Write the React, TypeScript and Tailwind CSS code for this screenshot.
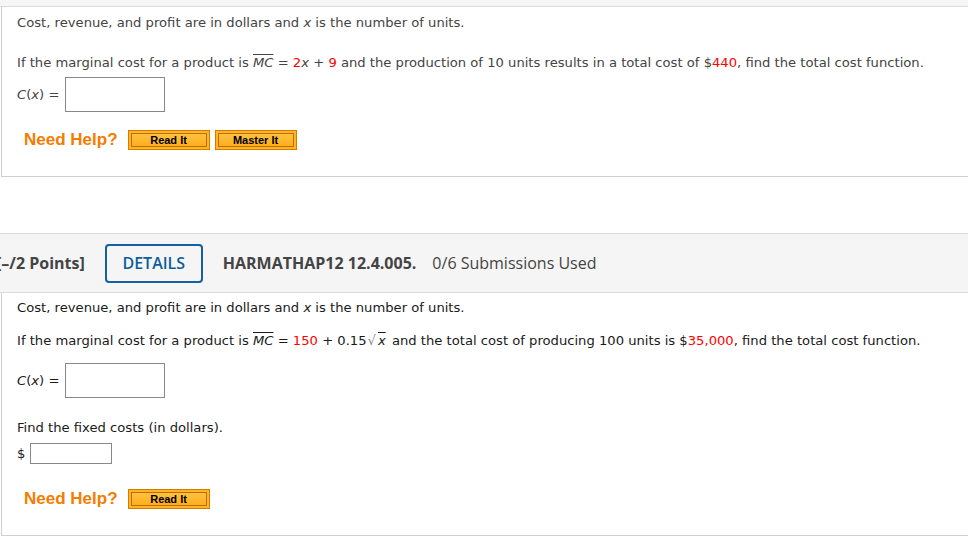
import type { ReactNode } from 'react'

const body = "font-['DejaVu_Sans',Verdana,sans-serif] text-[13.15px] leading-[18px]"

function Over({ children }: { children: ReactNode }) {
  return <span className="italic [text-decoration-line:overline]">{children}</span>
}

function Red({ children }: { children: ReactNode }) {
  return <span className="text-[#ff0000]">{children}</span>
}

function HelpButton({ label }: { label: string }) {
  return (
    <div className="flex h-[20px] w-[82px] items-center justify-center border border-[#d97a00] bg-[#ffb526] p-[2px]">
      <div className="flex h-full w-full items-center justify-center border border-[#c06c00] bg-gradient-to-b from-[#ffc240] to-[#ffae1a] font-['Liberation_Sans',Arial,sans-serif] text-[11px] font-bold text-black">
        {label}
      </div>
    </div>
  )
}

function NeedHelp({ buttons }: { buttons: string[] }) {
  return (
    <div className="flex h-[20px] items-center pl-[7px]">
      <span className="mr-[10px] font-['Liberation_Sans',Arial,sans-serif] text-[17px] font-bold text-[#f57c00]">
        Need Help?
      </span>
      <div className="flex gap-[5px]">
        {buttons.map((b) => (
          <HelpButton key={b} label={b} />
        ))}
      </div>
    </div>
  )
}

function AnswerRow() {
  return (
    <div className="flex items-center">
      <span className="w-[48px]">
        <span className="italic">C</span>(<span className="italic">x</span>) =
      </span>
      <div className="h-[35px] w-[100px] border border-[#888] bg-white" />
    </div>
  )
}

export default function App() {
  return (
    <div className="min-h-[548px] w-full overflow-hidden bg-white">
      <div className="h-[7px] border-b border-[#dcdcdc] bg-[#f6f6f6]" />

      {/* previous question */}
      <div className={`ml-[1px] border-b border-l border-[#cfcfcf] pb-[26px] pl-[15px] pt-[7px] text-[#444] ${body}`}>
        <p>
          Cost, revenue, and profit are in dollars and <span className="italic">x</span> is the number of units.
        </p>
        <p className="mt-[22px]">
          If the marginal cost for a product is <Over>MC</Over> = <Red>2</Red>
          <span className="italic">x</span> + <Red>9</Red> and the production of 10 units results in a total
          cost of $<Red>440</Red>, find the total cost function.
        </p>
        <div className="mt-[5px]">
          <AnswerRow />
        </div>
        <div className="mt-[18px]">
          <NeedHelp buttons={['Read It', 'Master It']} />
        </div>
      </div>

      <div className="h-[56px]" />

      {/* header bar */}
      <div className="flex h-[60px] items-center border-y border-[#dcdcdc] bg-[#f5f5f5] font-['Open_Sans',sans-serif] text-[16px] text-[#444]">
        <span className="ml-[-4px] font-bold">[–/2 Points]</span>
        <div className="ml-[20px] flex h-[39px] w-[98px] items-center justify-center rounded-[4px] border-2 border-[#1361a0] font-semibold text-[#0d5d9b]">
          DETAILS
        </div>
        <span className="ml-[20px] font-bold">HARMATHAP12 12.4.005.</span>
        <span className="ml-[16px]">0/6 Submissions Used</span>
      </div>

      {/* current question */}
      <div className={`ml-[1px] border-b border-l border-[#cfcfcf] pb-[26px] pl-[15px] pt-[6px] text-[#1a1a1a] ${body}`}>
        <p>
          Cost, revenue, and profit are in dollars and <span className="italic">x</span> is the number of units.
        </p>
        <p className="mt-[15px]">
          If the marginal cost for a product is <Over>MC</Over> = <Red>150</Red> + 0.15
          <span className="ml-[1px] text-[#888]">√</span>
          <span className="px-[2px] italic [text-decoration-line:overline]">x</span> and the total cost of producing 100
          units is $<Red>35,000</Red>, find the total cost function.
        </p>
        <div className="mt-[13px]">
          <AnswerRow />
        </div>
        <p className="mt-[21px]">Find the fixed costs (in dollars).</p>
        <div className="mt-[6px] flex items-center">
          <span className="w-[13px]">$</span>
          <div className="h-[21px] w-[82px] border border-[#888] bg-white" />
        </div>
        <div className="mt-[25px]">
          <NeedHelp buttons={['Read It']} />
        </div>
      </div>
    </div>
  )
}
